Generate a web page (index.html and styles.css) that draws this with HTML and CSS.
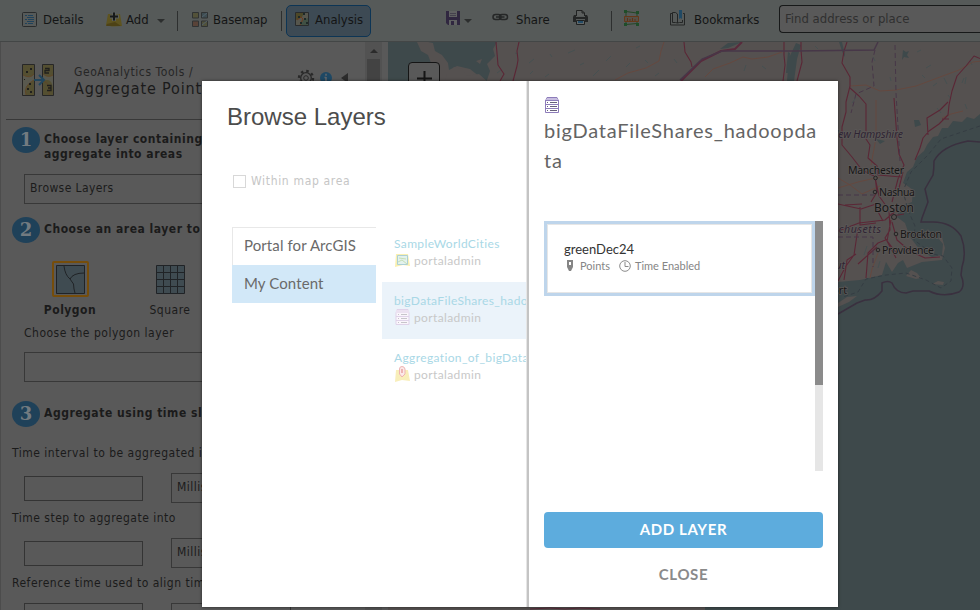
FILE: index.html
```html
<!DOCTYPE html>
<html lang="en">
<head>
<meta charset="utf-8">
<title>Map Viewer</title>
<link rel="stylesheet" href="styles.css">
</head>
<body>
<div class="app">
  <header class="toolbar">
    <div class="tool details"><svg width="15" height="15" viewBox="0 0 15 15"><rect x=".5" y=".5" width="14" height="14" rx="1" fill="#565a59" stroke="#292b2c"/><path d="M3 3.500h2M6 3.500h5M5 5.500h7M3 7.500h2M6 7.500h6M5 9.500h7M3 11.500h2M6 11.500h5" stroke="#20425b"/></svg><span>Details</span></div>
    <div class="tool add"><svg width="16" height="15" viewBox="0 0 16 15"><path d="M2 2h12l2 12-10 .5L0 13z" fill="#5e5420"/><path d="M1 12l8-2 6 4H0z" fill="#4d4216"/><path d="M8 0v9M4 4.500h9" stroke="#5a5e5d" stroke-width="4"/><path d="M8 .5v8M4 4.500h8" stroke="#171919" stroke-width="2"/></svg><span>Add</span><i class="caret"></i></div>
    <i class="divider"></i>
    <div class="tool basemap"><svg width="17" height="16" viewBox="0 0 17 16"><g stroke="#303333"><path d="M.5.500h6v5.500h-6z" fill="#535239"/><path d="M9.500.500h6v5.500h-6z" fill="#3e4d52"/><path d="M.5 9h6v5.500h-6z" fill="#594338"/><path d="M9.500 9h6v5.500h-6z" fill="#50513b"/></g><path d="M10 5l5-4M10 13l5-4" stroke="#52606a"/></svg><span>Basemap</span></div>
    <i class="divider"></i>
    <div class="tool analysis"><svg width="15" height="15" viewBox="0 0 15 15"><path d="M.5.500h13v13H.5z" fill="#56564d" stroke="#292b2c"/><path d="M1 1h8L7 5 1 8z" fill="#4d4828"/><path d="M6 13l2-5 5-2v7z" fill="#405044"/><path d="M2 8l4-3 2 2-3 6" stroke="#6a391d" fill="none"/><path d="M8 1h2v2H8zM3 4h2v2H3zM9 6h2v2H9zM5 10h2v2H5zM11 10h2v2h-2z" fill="#1e2928"/></svg><span>Analysis</span></div>
    <div class="tool save"><svg width="15" height="15" viewBox="0 0 15 15"><path d="M0 0h14v14H2l-2-2z" fill="#302740"/><path d="M3 0h8v6H3zM3 9h8v5H3z" fill="#606162"/><path d="M4 2.500h6M4 4.500h6" stroke="#45414e"/><path d="M5 10h3v4H5z" fill="#302740"/></svg><i class="caret"></i></div>
    <div class="tool share"><svg width="17" height="9" viewBox="0 0 17 9"><rect x="1" y="1.500" width="8" height="5" rx="2.500" fill="none" stroke="#252727" stroke-width="1.500"/><rect x="7.500" y="1.500" width="8" height="5" rx="2.500" fill="none" stroke="#252727" stroke-width="1.500"/><path d="M4 4h8.500" stroke="#252727" stroke-width="1.500"/></svg><span>Share</span></div>
    <div class="tool print"><svg width="17" height="16" viewBox="0 0 17 16"><path d="M4.500 6V.5H10L12.500 3v3M10 .5V3h2.500" fill="#5c5f5e" stroke="#202222"/><path d="M2 5h2v2h9V5h2l1 2v5h-3V9H4v3H1V7z" fill="#242626"/><path d="M4.500 10.500h8v4h-8z" fill="#62686a" stroke="#202222"/><path d="M6 12h5" stroke="#234b66" stroke-width="2"/></svg></div>
    <i class="divider"></i>
    <div class="tool measure"><svg width="16" height="16" viewBox="0 0 16 16"><path d="M2 1.500l11 1.500M2 3v10M13 3v11M2 14.500l11-1" fill="none" stroke="#254627"/><path d="M0 0h3v3H0zM12 1h3v3h-3zM0 13h3v3H0zM12 13h3v3h-3z" fill="#1f4d29"/><path d="M.5 6.500h14v5H.5z" fill="#555149" stroke="#653819"/><path d="M3.500 8v3M6 9v2M8.500 8v3M11 9v2" stroke="#5e3218"/></svg></div>
    <div class="tool bookmarks"><svg width="16" height="16" viewBox="0 0 16 16"><path d="M.5 15V3.500H2M2.500 12.500v-10h3L7.500 4v9L5.500 12.500zM.5 15h14V3.500H13M7.500 13l2-.5h3V10" fill="none" stroke="#242626"/><path d="M9 0h3v9l-1.500-1L9 9z" fill="#204964"/></svg><span>Bookmarks</span></div>
    <div class="search"><span>Find address or place</span></div>
  </header>

  <main class="workspace">
    <aside class="panel">
      <div class="panel-body">
        <div class="panel-title">
          <svg width="33" height="33" viewBox="0 0 33 33"><path d="M.5.500h12v31H.5zM20.500.500h11v31h-11z" fill="#59594f" stroke="#272727"/><path d="M1 1h11v9q-4 5-11 1zM21 1h10v10q-5 4-10-1zM12 16v15H4q-3-8 8-15zM21 17q11-5 10 14H21z" fill="#544f31"/><path d="M1 11q7 4 11-1M12 16q-11 6-8 15M21 10q5 4 10 1M21 17q8 2 6 14" stroke="#5f4728" fill="none"/><path d="M12 16h9M17 11l5 5-5 5" fill="none" stroke="#22465d" stroke-width="2"/><path d="M8 4h2v2H8zM4 7h2v2H4zM7 19h2v2H7zM5 24h2v2H5zM8 27h2v2H8zM2 15h1v1H2z" fill="#20201d"/><path d="M23 4.500h4v2h-4v2.500h4M25 21.500h4v5h-4M26 24h3" fill="none" stroke="#20201d" stroke-width="1.300"/></svg>
          <div class="titles"><div class="crumb">GeoAnalytics Tools /</div><div class="toolname">Aggregate Points</div></div>
          <div class="title-icons">
            <svg width="18" height="18" viewBox="0 0 18 18"><circle cx="9" cy="9" r="5.300" fill="none" stroke="#292929" stroke-width="1.300"/><circle cx="9" cy="9" r="7" fill="none" stroke="#292929" stroke-width="2.400" stroke-dasharray="2.500 3"/><circle cx="9" cy="9" r="2.300" fill="none" stroke="#292929"/></svg>
            <svg width="12" height="12" viewBox="0 0 12 12"><circle cx="6" cy="6" r="6" fill="#1e4864"/><path d="M6 1.800v2M6 5v5M4.500 5.500H6M4.500 10h3" stroke="#606569" stroke-width="1.600"/></svg>
            <svg width="7" height="10" viewBox="0 0 7 10"><path d="M7 0v10L0 5z" fill="#2c2c2c"/></svg>
          </div>
        </div>
        <section class="step one"><b class="num">1</b><h3><span>Choose layer containing points to</span><span>aggregate into areas</span></h3></section>
        <div class="select">Browse Layers</div>
        <section class="step two"><b class="num">2</b><h3><span>Choose an area layer to</span></h3></section>
        <div class="shapes">
          <div class="shape polygon"><div class="chosen"><svg width="29" height="29" viewBox="0 0 29 29"><path d="M.5.500h28v28H.5z" fill="#3f4b51" stroke="#202326"/><path d="M8 1q1 9 6 13 5 5 4 10l1 4M14 14q3-6 14-6" fill="none" stroke="#202326"/></svg></div><b>Polygon</b></div>
          <div class="shape square"><div class="plain"><svg width="29" height="29" viewBox="0 0 29 29"><path d="M.5.500h28v28H.5z" fill="#3f4b51" stroke="#202326"/><path d="M7.500 0v29M14.500 0v29M21.500 0v29M0 7.500h29M0 14.500h29M0 21.500h29" stroke="#202326"/></svg></div><span>Square</span></div>
        </div>
        <div class="poly-label">Choose the polygon layer</div>
        <div class="select"></div>
        <section class="step three"><b class="num">3</b><h3><span>Aggregate using time slices</span></h3></section>
        <div class="field-label">Time interval to be aggregated into</div>
        <div class="field-row"><div class="input"></div><div class="unit">Milliseconds</div></div>
        <div class="field-label">Time step to aggregate into</div>
        <div class="field-row"><div class="input"></div><div class="unit">Milliseconds</div></div>
        <div class="field-label">Reference time used to align time</div>
        <div class="field-row last"><div class="input"></div><div class="unit"></div></div>
      </div>
      <div class="panel-scroll"><i class="up"></i><div class="thumb"></div></div>
    </aside>
    <div class="map">
      <svg class="map-art" width="592" height="568" viewBox="388 42 592 568">
        <path class="water" d="M388 42h592v568H388z"/>
        <path class="land" d="M416 42H980V114L974 119 967 117 962 122 953 121 948 128 942 128 938 136 933 137 927 145 924 151 917 157 913 167 907 172 903 183 909 187 913 190 912 202 900 207 897 217 905 223 910 237 920 250 932 257 942 255 943 244 938 238 942 237 945 248 942 260 922 262 907 268 903 260 898 263 892 272 886 262 882 275 860 280 838 282V610H388V85z"/>
        <path class="water" d="M388 42h29l4 9 7 4 3 8 7 7-5 14H388zM428 42h69l-4 7 2 7-8 8 3 7-4 12-6-6-10-8-13-3-8 4-1-7-6-8-7-4-2-8z"/>
        <path class="land" d="M444 84l3-10 7-7 8 2 5 7 12-2 10 9v4zM476 61l6-2-2 5z"/>
        <path class="land" d="M838 303l9-6 10-1-8 6-11 5zM906 276l5-6 6 3 4 5-5 1zM932 284l6-3 6 1-1 3z"/>
        <g class="water"><path d="M796 43l5 2-4 14-3 22h-7l2-23zM788 52l2 1-2 20h-2zM839 42h3l3 13-1 2zM903 50l3 2 3-1-2 4 2 3-5-1-2 3zM914 120l5 0 2 5-6 2zM876 139l9 2-5 3z"/><path d="M728 43l14-1-14 6-8 1z"/></g>
        <g class="ponds"><path d="M515 53l3 1M529 63l5-4M545 77l4-3M568 53l7-3M593 76l6-6M606 61l5-5M636 48l4-2M655 76l4-3M674 59l3 4M744 71l2-6M762 66l4 3M815 46l3 3M852 103l3-4M873 57l2 4M890 77l1 4M917 52l4-2M944 78l3 6M937 108l4 5M844 133l3 5M847 235l3-7M864 255l3-9M891 247l4 8M878 268l2-7M970 60l2 5M948 95l3 4M965 104l2 5M550 54l2 3M580 65l4-2M626 67l4-4M645 60l3 3M497 73l4-3M530 74l3-3M926 68l5-3M933 86l4-3M962 83l2-5M965 84l1-7M922 75l3 3"/></g>
        <g class="minor"><path d="M615 80l13-7 18-5 13-7 2-10 3-9M705 77l8-8 17-6 13-6 9 2 16-2 14-5M850 86l16-1 14 6 16-1 20-4 24-9 19-7 14-8 9-1M838 178l12 7 12 9 18-8M838 188l20-6 22-5M876 100v38l-5 27M942 118l9-4 12-3M878 253l-6 16-2 9M889 215l2 8"/></g>
        <g class="road"><path d="M496 42l1 11 1 12 6 9-4 7M519 42l-2 9 1 9-1 6-4 15M684 42l1 10 6 10 1 5M784 42l0 13 1 10-2 16M801 42l0 8 1 12-5 19M847 42l-3 9-2 12 8 14 0 9-4 16 0 10-4 15 0 18 10 12 10 13 12 6M850 88l9 8 7 8v35l4 6-2 13 9 8 1 9 23 2M915 160l5-12 3-10 6-7 10-7 9-9 1-10 3-14 5-15 9-10 8-10 12 5M928 135l-1-17 13-8 8-8M942 119l7 0M875 177l4 19 10 14 1 20-5 8 12 16M876 204l-15 5-23-5M838 231l21-8 26-3 8-7M875 177l2 15-6 10M894 98l3 40 2 16 5 11-6 14-6 23M903 172l-6 24M897 205l-4 9M892 222l5 18 13 11 15 7 15-1M892 216l12-2M876 208l7 13M860 207v18l16-2M838 281l8-15 8-11 4-27M866 278l2-25 10-10 10-4M858 264l19-17M891 220l-4 21 9 17M845 205l17-1M844 280l3-20 9-6"/></g>
        <path class="interstate" d="M681 81l20-20 20-10 14-2 7-7"/>
        <path class="state" d="M680 80l22-21 20-8h74l78-1 4-8"/>
        <path class="state dashed" d="M875 50l-3 12 2 24-18 8-5 19M895 45l1 48 4 68M838 195h36M838 237h35v30"/>
        <path class="sea" d="M980 142l-12-1q-26 5-34 20 0 8-1 14l-8 14 3 13-6 16-1 4h12c14 0 22 5 28 14q6 16 1 31l-1 8q5 12-2 17-16 6-30-1h-16l-7 2q-10 0-14-10-4-3-10 0v8q-8 10-17 9l-8 3-19 11"/>
        <path class="shelf" d="M980 126l-18 6-21 7-13 16-17 17-8 19 5 19 7 16-1 14 19 14 10 2 9 12-1 13-10 7-15-8-20-7-20 2-20 4-8 13-15 5"/>
        <path class="roadline" d="M530 609l20-1 15 1 15-1 20 1"/>
        <path class="water" d="M705 607h275v3H705z"/>
        <g class="dots"><circle cx="875.500" cy="178" r="1.800"/><circle cx="875" cy="192" r="1.800"/><circle cx="894" cy="217" r="2.500"/><circle cx="896" cy="234" r="1.800"/><circle cx="878" cy="250" r="1.800"/></g>
        <g class="places"><text x="848" y="174" textLength="56">Manchester</text><text x="879" y="196" textLength="36">Nashua</text><text x="874" y="212" class="big" textLength="40">Boston</text><text x="900" y="238" textLength="42">Brockton</text><text x="882" y="254" textLength="52">Providence</text><text x="826" y="294">port</text></g>
        <g class="regions"><text x="831" y="138" textLength="72">New Hampshire</text><text x="822" y="233" textLength="59">ssachusetts</text><text x="828" y="269">icut</text></g>
      </svg>
      <div class="zoom-in"><svg width="15" height="15" viewBox="0 0 15 15"><path d="M7.500 0v15M0 7.500h15" stroke="#151515" stroke-width="2"/></svg></div>
    </div>
  </main>

  <div class="dialog">
    <section class="browse">
      <h1>Browse Layers</h1>
      <label class="within"><i class="box"></i><span>Within map area</span></label>
      <div class="columns">
        <nav class="sources"><div class="source">Portal for ArcGIS</div><div class="source active">My Content</div></nav>
        <div class="items">
          <div class="item first"><div class="name">SampleWorldCities</div><div class="owner"><svg width="17" height="15" viewBox="0 0 17 15"><path d="M2 1h12l2 12-7-1-8 2z" fill="#faf0b0"/><path d="M3.500 2.500h10v9h-10z" fill="#e3f2ed" stroke="#add0d5"/><path d="M4 9l4-2 5 4M5 5l7 1" stroke="#c6dfb5" fill="none"/></svg><span>portaladmin</span></div></div>
          <div class="item chosen-item"><div class="name">bigDataFileShares_hado</div><div class="owner"><svg width="17" height="17" viewBox="0 0 17 17"><path d="M3 .5h11l1 3.500v11.500H2V4z" fill="#faf6fc" stroke="#e0d3e9"/><path d="M2 1h13v3H2z" fill="#ece2f1"/><path d="M2 7.500h13M2 11.500h13" stroke="#e0d3e9"/><path d="M4 5.500h1M7 5.500h6M4 9.500h1M7 9.500h6M4 13.500h1M7 13.500h6" stroke="#c7c5ca"/></svg><span>portaladmin</span></div></div>
          <div class="item"><div class="name">Aggregation_of_bigData</div><div class="owner"><svg width="17" height="17" viewBox="0 0 17 17"><path d="M2 4h12l2 11-8-1-7 2z" fill="#f8eeb9"/><path d="M5.500 3q0-2.500 2.500-2.500t3 2.500v5l-3 3-2.500-3z" fill="#fce9e8" stroke="#eeb4b3"/><path d="M8 3v4" stroke="#eeb4b3" stroke-width="2"/></svg><span>portaladmin</span></div></div>
        </div>
      </div>
    </section>
    <section class="detail">
      <svg class="share-icon" width="14" height="16" viewBox="0 0 14 16"><path d="M2 .5h10L13.500 4v11.500H.5V4z" fill="#fff" stroke="#8d7cba"/><path d="M2 1h10l1 2.500H1z" fill="#c7bde0"/><path d="M0 3.500h14M0 7.500h14M0 11.500h14" stroke="#8d7cba"/><path d="M2 5.500h1M5 5.500h7M2 9.500h1M5 9.500h7M2 13.500h1M5 13.500h7" stroke="#67617a"/></svg>
      <h2><span>bigDataFileShares_hadoopda</span><span>ta</span></h2>
      <div class="layer-list">
        <div class="layer"><div class="layer-name">greenDec24</div><div class="meta"><svg width="8" height="12" viewBox="0 0 8 12"><path d="M1 0h6v7L5 11H3L1 7z" fill="#858585"/><path d="M3 2h2v3H3z" fill="#fff"/></svg><span class="kind">Points</span><svg class="clock" width="12" height="12" viewBox="0 0 12 12"><circle cx="6" cy="6" r="5.300" fill="none" stroke="#8b8b8b"/><path d="M6 2v4.500h3.500" fill="none" stroke="#8b8b8b"/></svg><span>Time Enabled</span></div></div>
        <div class="track"><div class="grip"></div></div>
      </div>
      <button class="primary">ADD LAYER</button>
      <button class="close">CLOSE</button>
    </section>
  </div>
</div>
</body>
</html>
```

FILE: styles.css
```css
* { box-sizing: border-box; }
body { margin: 0; font-family: "DejaVu Sans Condensed", "DejaVu Sans", sans-serif; font-stretch: condensed; font-size: 12px; color: #1b1b1b; }
svg { display: block; flex: none; }
h1, h2, h3 { margin: 0; }
.app { position: relative; width: 980px; height: 610px; overflow: hidden; display: flex; flex-direction: column; background: #595959; }

.toolbar { height: 42px; flex: none; display: flex; align-items: center; background: #565a59; border-bottom: 1px solid #434646; padding: 0 0 2px 22px; color: #141515; font-size: 13px; }
.tool { display: flex; align-items: center; white-space: nowrap; }
.details { gap: 6px; width: 84px; }
.add { gap: 4px; width: 71px; }
.caret { border: 4px solid transparent; border-top: 4px solid #2c2e2e; border-bottom: 0; margin: 3px 0 0 4px; }
.divider { width: 1px; height: 20px; margin-top: 2px; background: #2d2f2f; }
.basemap { gap: 4px; margin-left: 14px; width: 89px; }
.analysis { gap: 5px; width: 85px; height: 32px; margin: 2px 0 0 4px; padding: 0 0 2px 8px; border: 1px solid #0d3555; border-radius: 5px; background: #3d4a54; }
.save { margin: -3px 0 0 75px; width: 46px; }
.save .caret { margin: 5px 0 0 3px; }
.share { gap: 7px; width: 80px; }
.share svg { margin-top: -4px; }
.print { width: 39px; margin-top: -3px; }
.measure { margin: -3px 0 0 12px; width: 46px; }
.bookmarks { gap: 8px; width: 109px; }
.bookmarks svg { margin-top: -3px; }
.search { flex: 1; height: 28px; margin-top: -2px; padding: 5px; border: 1px solid #171919; border-right: 0; border-radius: 4px 0 0 4px; background: #595959; color: #303030; }

.workspace { flex: 1; display: flex; min-height: 0; }
.panel { width: 388px; flex: none; display: flex; background: #595959; border-left: 1px solid #4c4c4c; overflow: hidden; }
.panel-body { width: 364px; padding-left: 5px; white-space: nowrap; letter-spacing: .5px; }
.panel-title { display: flex; height: 78px; padding: 22px 0 0 16px; border-bottom: 1px solid #383838; }
.titles { margin-left: 19px; width: 223px; }
.crumb { font-size: 12px; line-height: 16px; color: #262626; letter-spacing: .58px; }
.toolname { font-size: 16px; line-height: 18px; letter-spacing: .85px; }
.title-icons { display: flex; gap: 5px; align-items: center; height: 28px; }
.title-icons svg:last-child { margin-left: 4px; }
.panel-scroll { width: 17px; background: #525252; display: flex; flex-direction: column; align-items: center; }
.up { border: 4px solid transparent; border-bottom-color: #2b2b2b; border-top: 0; margin-top: 7px; }
.thumb { margin-top: 6px; width: 13px; height: 200px; background: #434343; }
.step { display: flex; margin-left: 6px; }
.num { width: 28px; height: 26px; border-radius: 50%; background: #1f4159; color: #737b80; text-align: center; font: bold 18px/26px "DejaVu Serif", serif; letter-spacing: 0; margin-right: 4px; flex: none; }
.step h3 { font-size: 12px; line-height: 15px; padding-top: 5px; letter-spacing: .53px; }
.step h3 span { display: block; }
.one { margin-top: 7px; height: 47px; }
.select { margin-left: 18px; width: 320px; height: 30px; border: 1px solid #383838; padding: 5px; line-height: 16px; letter-spacing: .4px; }
.two { margin-top: 13px; height: 44px; }
.shapes { display: flex; height: 64px; }
.shape { width: 100px; display: flex; flex-direction: column; align-items: center; }
.polygon { margin-left: 14px; }
.chosen { width: 37px; height: 36px; border: 2px solid #764d0a; border-radius: 2px; padding: 2px; }
.plain { height: 36px; padding-top: 4px; }
.shape b, .shape > span { margin-top: 6px; }
.poly-label { margin: 1px 0 11px 18px; line-height: 15px; }
.three { margin-top: 19px; height: 45px; }
.field-label { margin-left: 6px; height: 15px; line-height: 15px; }
.field-row { display: flex; align-items: center; height: 30px; margin: 12px 0 8px 18px; }
.input { width: 119px; height: 25px; border: 1px solid #343434; margin-right: 28px; }
.unit { width: 120px; height: 30px; border: 1px solid #383838; padding: 6px 5px; }
.last .input { height: 30px; }

.map { position: relative; flex: 1; overflow: hidden; }
.map-art { width: 592px; height: 568px; }
.water { fill: #3e494b; }
.land { fill: #555150; }
.minor, .road, .interstate, .ponds { fill: none; stroke-linejoin: round; }
.minor { stroke: #66473d; stroke-width: .9; }
.road { stroke: #5b2736; stroke-width: 1.1; }
.interstate { stroke: #592a3c; stroke-width: 2; }
.roadline { fill: none; stroke: #592a39; }
.ponds { stroke: #465051; }
.state { fill: none; stroke: #473748; stroke-width: 1.4; }
.dashed { stroke-width: 1; stroke-dasharray: 5 3; }
.sea { fill: none; stroke: #3a303f; stroke-width: 1.5; }
.shelf { fill: none; stroke: #353d43; stroke-dasharray: 4 3; }
.dots { fill: #555150; stroke: #252424; }
.places, .regions { font: 10.5px "Noto Sans", sans-serif; fill: #171616; stroke: #5b5857; stroke-width: 1.5px; paint-order: stroke; }
.places .big { font-size: 12px; }
.regions { font-style: italic; fill: #2f2433; }
.zoom-in { position: absolute; left: 20px; top: 20px; width: 32px; height: 32px; border: 1px solid #151515; border-radius: 4px; background: #595959; display: grid; place-items: center; }

.dialog { position: absolute; left: 202px; top: 81px; width: 636px; height: 526px; background: #fff; display: flex; box-shadow: 0 0 3px rgba(0,0,0,.55); font-family: Lato, sans-serif; font-stretch: normal; color: #6a6a6a; }
.browse { width: 325px; flex: none; padding: 20px 0 0 25px; overflow: hidden; white-space: nowrap; }
.browse h1 { font: 24px/31px "Liberation Sans", sans-serif; color: #4c4c4c; }
.within { display: flex; align-items: center; gap: 5px; margin: 40px 0 0 6px; height: 18px; font: 12px "DejaVu Sans Condensed", "DejaVu Sans", sans-serif; letter-spacing: .67px; color: #c6c6c6; }
.box { width: 13px; height: 13px; border: 1px solid #d8d8d8; }
.columns { display: flex; margin-top: 37px; }
.sources { width: 144px; flex: none; margin-left: 5px; font-size: 15px; letter-spacing: .1px; }
.source { height: 38px; padding: 0 11px; line-height: 35px; border: 1px solid #e8e8e8; border-width: 1px 0 0 1px; }
.active { background: #d2e8f8; border-color: #d2e8f8; }
.items { width: 146px; flex: none; margin-left: 6px; }
.item { height: 57px; padding: 10px 0 0 12px; font-size: 12px; letter-spacing: .37px; }
.name { line-height: 17px; color: #a9d8e6; }
.owner { display: flex; align-items: center; gap: 3px; height: 16px; color: #c8c8c8; }
.chosen-item { background: #ebf3fa; }
.first { height: 55px; padding-top: 8px; }
.detail { width: 311px; flex: none; padding: 16px 15px 0; border-left: 2px solid #c4c4c4; box-shadow: -1px 0 0 #e6e6e6; background: #fff; }
.share-icon { margin-left: 1px; }
.detail h2 { height: 108px; padding-top: 2px; font-size: 20px; font-weight: 400; line-height: 30px; letter-spacing: .76px; color: #646464; white-space: nowrap; }
.detail h2 span { display: block; }
.layer-list { height: 250px; display: flex; }
.layer { width: 271px; height: 75px; border: 3px solid #bed5eb; outline: 1px solid #e6e6e6; outline-offset: -4px; padding: 17px; }
.layer-name { font-size: 13px; line-height: 17px; color: #333; }
.meta { display: flex; align-items: center; height: 15px; color: #858585; font-size: 11px; margin-left: 2px; }
.kind { margin-left: 6px; }
.clock { margin: 0 4px 0 9px; }
.track { width: 8px; background: #e6e6e6; }
.grip { height: 164px; background: #8b8b8b; }
button { display: block; border: 0; padding: 0 0 2px; width: 279px; font: 700 15px Lato, sans-serif; letter-spacing: .6px; }
.primary { height: 36px; margin-top: 41px; border-radius: 4px; color: #fff; background: #5dacdd; }
.close { height: 36px; margin-top: 9px; background: none; color: #8a8a8a; }
```
